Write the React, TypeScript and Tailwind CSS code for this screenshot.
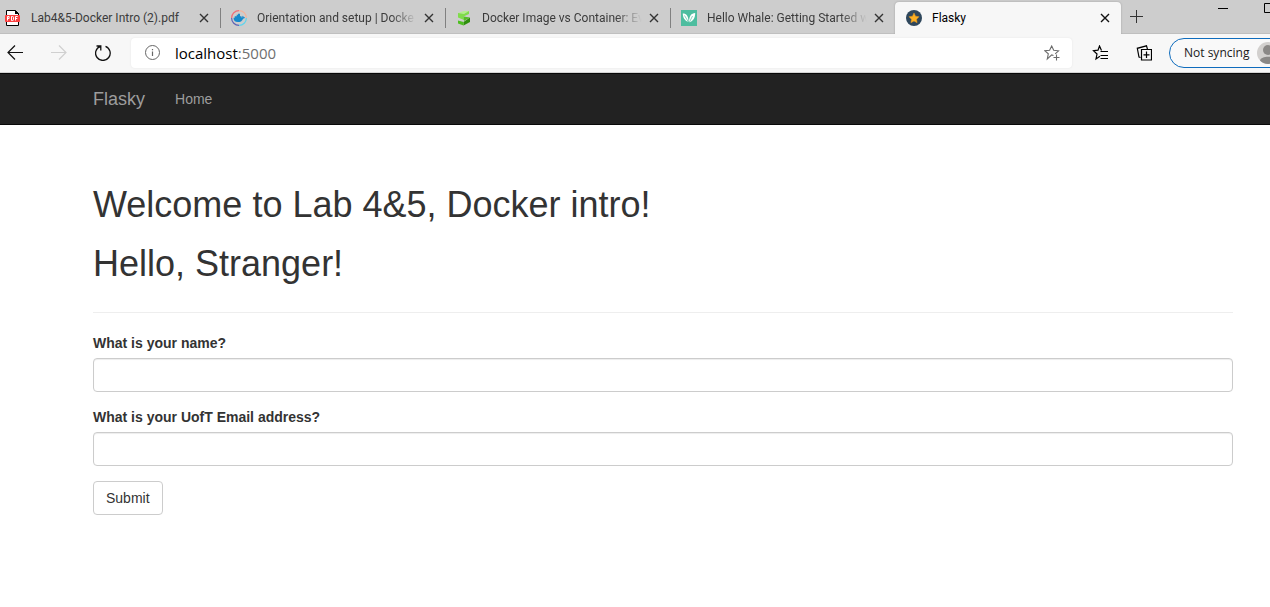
import React from "react";

const ui = "font-[Roboto,'Open_Sans',sans-serif]";

function PdfIcon() {
  return (
    <svg width="16" height="16" viewBox="0 0 16 16" aria-hidden="true">
      <path d="M1.500 .5h9l3 3v12h-12z" fill="#fff" stroke="#000" />
      <path d="M10 0v4h4z" fill="#000" />
      <rect x="0" y="5" width="15" height="7" rx="1" fill="#fb3e3e" />
      <path
        d="M2.500 10.500v-4h1.600v2H2.500M6.500 6.500v4h1q1 0 1-1v-2q0-1-1-1zM10.500 10.500v-4h2.200M10.500 8.500h1.800"
        fill="none"
        stroke="#fff"
      />
    </svg>
  );
}

function DockerIcon() {
  return (
    <svg width="16" height="16" viewBox="0 0 16 16" fill="none" aria-hidden="true">
      <path d="M8 .6A7.400 7.400 0 0 1 15.400 8" stroke="#f3b39b" strokeWidth="1.200" />
      <path d="M15.400 8A7.400 7.400 0 0 1 8 15.400" stroke="#5cd5ee" strokeWidth="1.200" />
      <path d="M8 15.400A7.400 7.400 0 0 1 .6 8" stroke="#5d62b5" strokeWidth="1.200" />
      <path d="M.6 8A7.400 7.400 0 0 1 8 .6" stroke="#ee6f78" strokeWidth="1.200" />
      <path
        d="M2.500 7.800h1.200V6.200h2V4.700h1.300V3.700h2V6.200h1.500v1.400h.8c-.1-.8 0-1.300.4-1.900.7.4 1 .9 1.100 1.500.6 0 1 .1 1.300.4-.4.800-1.100 1.100-2 1.100-1 2.500-2.800 3.400-5.200 3.400-2.900 0-4.500-1.500-4.400-4.300z"
        fill="#1489cc"
      />
    </svg>
  );
}

function GreenIcon() {
  return (
    <svg width="16" height="16" viewBox="0 0 16 16" aria-hidden="true">
      <path d="M2 3L8 1l5 0-5 3z" fill="#b4f08c" />
      <path d="M2 3l6 1 5-3v3L7.500 6.500 8 10 2 7.500z" fill="#7fdc4a" />
      <path d="M7.500 6.500L14 7.500 8 11z" fill="#55bd25" />
      <path d="M14 7.500V12l-6.500 3.500V12z" fill="#2f8f0c" />
      <path d="M2 10.500l5.500 1.500v3.500L2 13.500z" fill="#4dbf1f" />
    </svg>
  );
}

function LeafIcon() {
  return (
    <svg width="16" height="16" viewBox="0 0 16 16" aria-hidden="true">
      <path d="M0 0h16v16H0z" fill="#4dbd9f" />
      <path d="M1.800 3.500c3.500 0 5.700 2.500 5.800 8.500C4 11 1.800 8 1.800 3.500z" fill="#fff" />
      <path d="M14.200 3c-4 .3-6 2.600-6.300 9.500 4.100-1 6.300-4.500 6.300-9.500z" fill="#fff" />
      <path d="M3.500 5.500L8 13l3.500-7" stroke="#4dbd9f" strokeWidth=".7" fill="none" />
    </svg>
  );
}

function StarBadgeIcon() {
  return (
    <svg width="16" height="16" viewBox="0 0 16 16" aria-hidden="true">
      <circle cx="8" cy="8" r="8" fill="#2f475c" />
      <path
        d="M8 3l1.500 3.200 3.500.5-2.500 2.500.6 3.500L8 11l-3.100 1.700.6-3.500L3 6.700l3.500-.5z"
        fill="#fdb022"
        stroke="#e99a24"
        strokeWidth=".5"
      />
    </svg>
  );
}

type TabProps = {
  icon: React.ReactNode;
  title: string;
  fade?: boolean;
  active?: boolean;
  className: string;
};

function Tab({ icon, title, fade, active, className }: TabProps) {
  return (
    <div className={`flex shrink-0 items-center pr-[11px] ${className}`}>
      <a href="#" className="flex min-w-0 flex-1 items-center gap-2.5">
        <span className="shrink-0">{icon}</span>
        <span
          className={`min-w-0 flex-1 overflow-hidden whitespace-nowrap text-[12px] leading-4 ${
            active ? "text-black" : "text-[#3b3b3b]"
          } ${fade ? "[mask-image:linear-gradient(to_right,#000_82%,transparent_98%)]" : ""}`}
        >
          {title}
        </span>
      </a>
      <button type="button" aria-label="Close tab" className="ml-1 shrink-0">
        <svg width="10" height="10" viewBox="0 0 10 10" fill="none" stroke={active ? "#111" : "#333"} strokeWidth="1.400">
          <path d="M1 1l8 8M9 1L1 9" />
        </svg>
      </button>
    </div>
  );
}

function TabBar() {
  const divider = <span className="mt-2 h-5 w-px shrink-0 bg-[#808080]" />;
  return (
    <div className="flex h-[34px] overflow-hidden bg-[#cdcdcd] shadow-[inset_0_-1px_0_#bfbfbf]">
      <Tab icon={<PdfIcon />} title="Lab4&5-Docker Intro (2).pdf" className="w-[220px] pl-[5px] pt-0.5" />
      {divider}
      <Tab icon={<DockerIcon />} title="Orientation and setup | Docke" fade className="w-56 pl-2.5 pt-0.5" />
      {divider}
      <Tab icon={<GreenIcon />} title="Docker Image vs Container: Ev" fade className="w-56 pl-2.5 pt-0.5" />
      {divider}
      <Tab icon={<LeafIcon />} title="Hello Whale: Getting Started w" fade className="w-56 pl-2.5 pt-0.5" />
      <Tab
        icon={<StarBadgeIcon />}
        title="Flasky"
        active
        className="mt-0.5 w-[226px] rounded-t bg-[#f7f7f7] pl-[11px] shadow-[0_0_2px_#999]"
      />
      <button type="button" aria-label="New tab" className="ml-[9px] shrink-0">
        <svg width="13" height="34" viewBox="0 0 13 34" fill="none" stroke="#333">
          <path d="M6.500 10v13M0 16.500h13" />
        </svg>
      </button>
      <div className="ml-auto flex shrink-0">
        <button type="button" aria-label="Minimize" className="mr-9">
          <svg width="10" height="34" viewBox="0 0 10 34" stroke="#000">
            <path d="M0 8.500h10" />
          </svg>
        </button>
        <button type="button" aria-label="Maximize" className="w-1.5 overflow-hidden">
          <svg width="10" height="34" viewBox="0 0 10 34" fill="none" stroke="#000" className="max-w-none">
            <path d="M.5 3.500h9v9h-9z" />
          </svg>
        </button>
      </div>
    </div>
  );
}

function Toolbar() {
  return (
    <div className="flex h-[39px] items-center overflow-hidden border-b border-[#d4d4d4] bg-[#f7f7f7] pl-[7px]">
      <button type="button" aria-label="Back">
        <svg width="16" height="16" viewBox="0 0 16 16" fill="none" stroke="#111" strokeWidth="1.200">
          <path d="M16 7.500H1M8 .5l-7 7 7 7" />
        </svg>
      </button>
      <button type="button" aria-label="Forward" className="ml-7">
        <svg width="16" height="16" viewBox="0 0 16 16" fill="none" stroke="#d0d0d0" strokeWidth="1.200">
          <path d="M0 7.500h15M8 .5l7 7-7 7" />
        </svg>
      </button>
      <button type="button" aria-label="Refresh" className="ml-7">
        <svg width="16" height="16" viewBox="0 0 16 16" fill="none" stroke="#111" strokeWidth="1.300">
          <path d="M10.500 1.300A7.300 7.300 0 1 1 5.300 1.300M1.500 1h4.300v4.500" />
        </svg>
      </button>
      <div className="ml-5 flex h-[30px] min-w-0 flex-1 items-center rounded bg-white pl-3.5 pr-3 shadow-[0_0_2px_#e2e2e2]">
        <svg width="16" height="16" viewBox="0 0 16 16" fill="none" stroke="#666" className="shrink-0" aria-hidden="true">
          <circle cx="7.500" cy="7.500" r="7" />
          <path d="M7.500 6.500V11M7.500 4v1.200" strokeWidth="1.200" />
        </svg>
        <a href="#" className="ml-3.5 flex-1 font-['Open_Sans',sans-serif] text-[15px] leading-5 text-black">
          localhost<span className="text-[#6f6f6f]">:5000</span>
        </a>
        <button type="button" aria-label="Add to favorites">
          <svg width="16" height="16" viewBox="0 0 16 16" fill="none" stroke="#6b6b6b" strokeWidth="1.100">
            <path d="M9.500 10.500L7.700 9.900 3.300 14l1-5.200L.9 5.800l4.700-.5L7.700 1l2 4.300 4.800.5-3.300 3M12.500 9.500v6M9.500 12.500h6" />
          </svg>
        </button>
      </div>
      <button type="button" aria-label="Favorites" className="ml-5">
        <svg width="16" height="16" viewBox="0 0 16 16" fill="none" stroke="#000" strokeWidth="1.200">
          <path d="M8 11.300L4 14l1-5-3.500-3.300 4.500-.5L7.500 1l2 4.500M8.500 6.500h7.500M8.500 10.500h7.500M8.500 13.500h7.500" />
        </svg>
      </button>
      <button type="button" aria-label="Collections" className="ml-7">
        <svg width="16" height="16" viewBox="0 0 16 16" fill="none" stroke="#000" strokeWidth="1.200">
          <path d="M5.500 4.500h10v10.500h-10zM10.500 6.500v6.500M7.500 9.800H13.500M4.500 12.500L3 12 1.300 3.300 10.500.8l1 3.500" />
        </svg>
      </button>
      <button
        type="button"
        className="-mr-4 ml-[17px] flex h-[30px] w-[117px] shrink-0 items-center justify-between rounded-full border border-[#0f6cbd] bg-white/30 pl-3.5 pr-1.5"
      >
        <span className="font-['Open_Sans',sans-serif] text-[12px] leading-4 text-[#1a1a1a]">Not syncing</span>
        <svg width="22" height="22" viewBox="0 0 22 22" aria-hidden="true">
          <circle cx="11" cy="11" r="11" fill="#d2d0ce" />
          <circle cx="11" cy="8" r="5" fill="#8a8886" />
          <path d="M3 18.500c1-5 15-5 16 0a11 11 0 0 1-16 0z" fill="#8a8886" />
        </svg>
      </button>
    </div>
  );
}

function Field({ id, label, type }: { id: string; label: string; type: string }) {
  return (
    <div className="mb-[15px]">
      <label htmlFor={id} className="mb-[5px] block text-sm font-bold">
        {label}
      </label>
      <input
        id={id}
        type={type}
        className="block h-[34px] w-full rounded border border-[#ccc] bg-white px-3 text-sm shadow-[inset_0_1px_1px_rgba(0,0,0,0.075)] outline-none focus:border-[#66afe9]"
      />
    </div>
  );
}

export default function App() {
  return (
    <div className="min-h-screen overflow-x-hidden bg-white font-['Liberation_Sans',Arial,sans-serif] text-sm text-[#333]">
      <header className={ui}>
        <TabBar />
        <Toolbar />
      </header>
      <nav className="flex h-[52px] items-center border-y border-[#080808] bg-[#222] pl-[93px] pr-[37px] text-[#9d9d9d]">
        <a href="#" className="text-lg leading-5">
          Flasky
        </a>
        <a href="#" className="ml-[30px] text-sm leading-5">
          Home
        </a>
      </nav>
      <main className="pb-5 pl-[93px] pr-[37px] pt-[60px]">
        <div className="mb-5 border-b border-[#eee] pb-7 text-4xl leading-10">
          <h1>Welcome to Lab 4&amp;5, Docker intro!</h1>
          <h1 className="mt-[19px]">Hello, Stranger!</h1>
        </div>
        <form onSubmit={(e) => e.preventDefault()}>
          <Field id="name" label="What is your name?" type="text" />
          <Field id="email" label="What is your UofT Email address?" type="text" />
          <button
            type="submit"
            className="h-[34px] rounded border border-[#ccc] bg-white px-3 text-sm text-[#333]"
          >
            Submit
          </button>
        </form>
      </main>
    </div>
  );
}
